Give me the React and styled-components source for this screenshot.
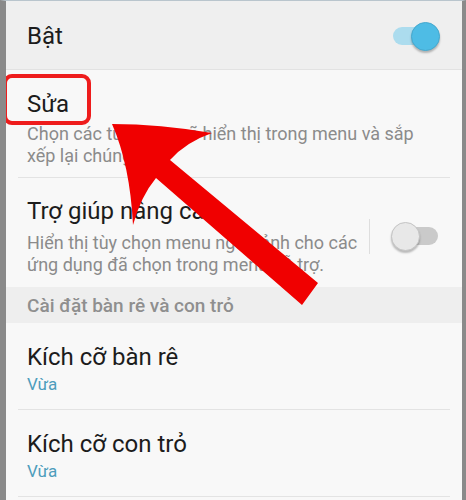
import React from "react";
import styled, { createGlobalStyle } from "styled-components";

const Global = createGlobalStyle`
  html, body {
    margin: 0;
    padding: 0;
    background: #8a8a8a;
  }
  * {
    box-sizing: border-box;
  }
`;

const Screen = styled.div`
  position: relative;
  width: 466px;
  height: 500px;
  overflow: hidden;
  background: #f8f8f8;
  border-left: 6px solid #8a8a8a;
  border-right: 4px solid #8a8a8a;
  border-top: 1px solid #b9c5cd;
  font-family: Roboto, "Noto Sans", sans-serif;
  display: flex;
  flex-direction: column;
`;

const MasterRow = styled.div`
  height: 69px;
  flex-shrink: 0;
  background: #efefef;
  border-bottom: 1px solid #e2e2e2;
  display: flex;
  align-items: center;
  justify-content: space-between;
  padding: 2px 22px 0 21px;
`;

const Row = styled.div`
  flex-shrink: 0;
  display: flex;
  align-items: center;
  padding: ${(p) => p.$pad || "19px 0 11px"};
  margin: 0 12px;
  padding-left: 9px;
  border-bottom: ${(p) => (p.$last ? "none" : "1px solid #e3e3e3")};
`;

const TextCol = styled.div`
  flex: 1;
  display: flex;
  flex-direction: column;
`;

const Title = styled.div`
  font-size: 24px;
  line-height: 30px;
  color: #1c1c1c;
`;

const Sub = styled.div`
  font-size: 18px;
  line-height: 22px;
  color: #8b8b8b;
  margin-top: ${(p) => p.$gap || 4}px;
  padding-right: ${(p) => p.$right || 0}px;
`;

const Value = styled.div`
  font-size: 17px;
  line-height: 22px;
  color: #4d9dbc;
  margin-top: 1px;
`;

const Side = styled.div`
  display: flex;
  align-items: center;
  gap: 21px;
  margin-right: 10px;
`;

const VLine = styled.div`
  width: 1px;
  height: 35px;
  background: #dedede;
`;

const SwitchBox = styled.div`
  position: relative;
  width: 49px;
  height: 29px;
  flex-shrink: 0;
`;

const Track = styled.div`
  position: absolute;
  left: 2px;
  right: 2px;
  top: 5px;
  height: 18px;
  border-radius: 9px;
  background: ${(p) => (p.$on ? "#acdcee" : "#cacaca")};
`;

const Thumb = styled.div`
  position: absolute;
  top: 0;
  ${(p) => (p.$on ? "right: 0;" : "left: 0;")}
  width: 29px;
  height: 29px;
  border-radius: 50%;
  background: ${(p) => (p.$on ? "#4ebce5" : "#e8e8e8")};
  border: 1px solid ${(p) => (p.$on ? "#45a9cf" : "#c4c4c4")};
  box-shadow: 0 2px 2px rgba(0, 0, 0, 0.25);
`;

const Section = styled.div`
  height: 36px;
  flex-shrink: 0;
  background: #eeeeee;
  display: flex;
  align-items: center;
  padding-left: 21px;
  font-size: 19px;
  font-weight: 500;
  color: #8f8f8f;
`;

const Highlight = styled.div`
  position: absolute;
  left: -3px;
  top: 73px;
  width: 88px;
  height: 51px;
  border: 4px solid #ee1c1c;
  border-radius: 9px;
  pointer-events: none;
`;

const Overlay = styled.svg`
  position: absolute;
  left: -6px;
  top: -1px;
  pointer-events: none;
`;

const Switch = ({ on }) => (
  <SwitchBox>
    <Track $on={on} />
    <Thumb $on={on} />
  </SwitchBox>
);

export default function App() {
  return (
    <>
      <Global />
      <Screen>
        <MasterRow>
          <Title>Bật</Title>
          <Switch on />
        </MasterRow>
        <Row $pad="19px 0 10px">
          <TextCol>
            <Title>Sửa</Title>
            <Sub $right={20}>Chọn các tùy chọn sẽ hiển thị trong menu và sắp xếp lại chúng.</Sub>
          </TextCol>
        </Row>
        <Row $pad="18px 0 11px" $last>
          <TextCol>
            <Title>Trợ giúp nâng cao</Title>
            <Sub $gap={6}>Hiển thị tùy chọn menu ngữ cảnh cho các ứng dụng đã chọn trong menu hỗ trợ.</Sub>
          </TextCol>
          <Side>
            <VLine />
            <Switch />
          </Side>
        </Row>
        <Section>Cài đặt bàn rê và con trỏ</Section>
        <Row $pad="19px 0 14px">
          <TextCol>
            <Title>Kích cỡ bàn rê</Title>
            <Value>Vừa</Value>
          </TextCol>
        </Row>
        <Row $pad="19px 0 14px">
          <TextCol>
            <Title>Kích cỡ con trỏ</Title>
            <Value>Vừa</Value>
          </TextCol>
        </Row>
        <Highlight />
        <Overlay width="466" height="500" viewBox="0 0 466 500">
          <path
            d="M112,124 Q160,124 212,133 Q186,142 170,160 L318,283 L302,305 L156,178 Q141,196 133,225 Q130,165 112,124 Z"
            fill="#f00000"
          />
        </Overlay>
      </Screen>
    </>
  );
}
